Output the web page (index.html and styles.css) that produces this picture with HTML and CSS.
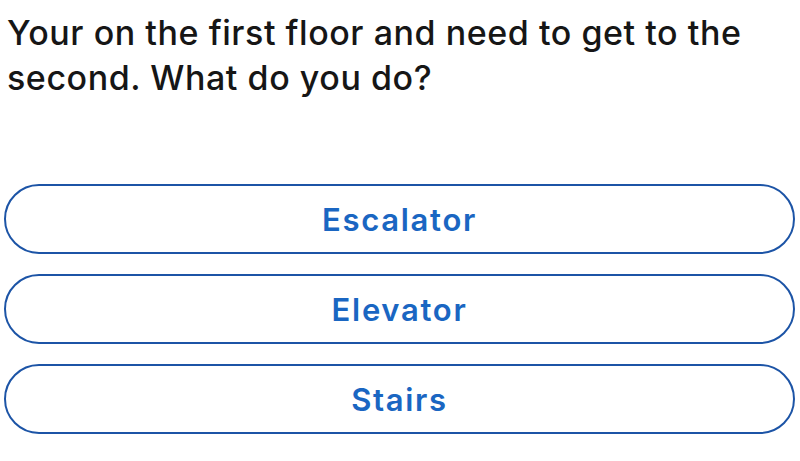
FILE: index.html
```html
<!DOCTYPE html>
<html>
<head>
<meta charset="utf-8">
<link rel="stylesheet" href="styles.css">
</head>
<body>
<main class="screen">
  <h1 class="question">Your on the first floor and need to get to the second. What do you do?</h1>
  <div class="options">
    <button class="option">Escalator</button>
    <button class="option">Elevator</button>
    <button class="option">Stairs</button>
  </div>
</main>
</body>
</html>
```
FILE: styles.css
```css
html, body {
  margin: 0;
  padding: 0;
  background: #ffffff;
}
.screen {
  width: 800px;
  height: 461px;
  display: flex;
  flex-direction: column;
  font-family: Inter, "Liberation Sans", sans-serif;
}
.question {
  margin: 0;
  padding: 10px 40px 0 7px;
  font-size: 34px;
  font-weight: 500;
  line-height: 45px;
  color: #161616;
  letter-spacing: 0.55px;
}
.options {
  display: flex;
  flex-direction: column;
  gap: 20px;
  padding: 0 5px 0 4px;
  margin-top: 84px;
}
.option {
  height: 70px;
  border: 2px solid #1c54a6;
  border-radius: 35px;
  background: #ffffff;
  color: #1a66c2;
  font-family: Inter, "Liberation Sans", sans-serif;
  font-size: 31px;
  font-weight: 600;
  letter-spacing: 1.7px;
  padding: 0;
}
```
